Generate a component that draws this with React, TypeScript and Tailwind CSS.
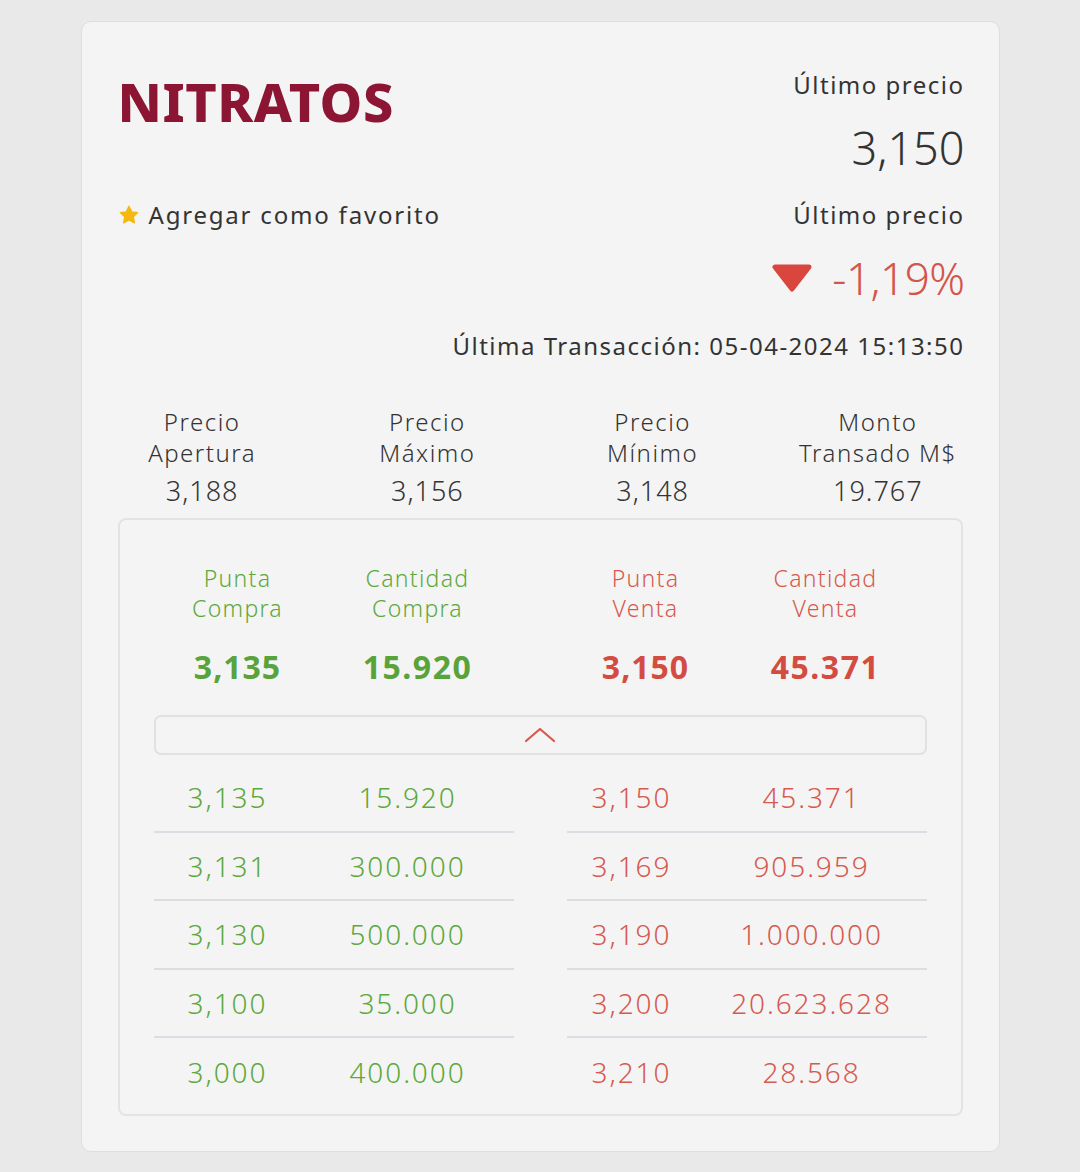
import React from 'react';

const font = { fontFamily: '"Noto Sans", "Open Sans", sans-serif' };

interface BookRow {
  bidPrice: string;
  bidQty: string;
  askPrice: string;
  askQty: string;
}

const book: BookRow[] = [
  { bidPrice: '3,135', bidQty: '15.920', askPrice: '3,150', askQty: '45.371' },
  { bidPrice: '3,131', bidQty: '300.000', askPrice: '3,169', askQty: '905.959' },
  { bidPrice: '3,130', bidQty: '500.000', askPrice: '3,190', askQty: '1.000.000' },
  { bidPrice: '3,100', bidQty: '35.000', askPrice: '3,200', askQty: '20.623.628' },
  { bidPrice: '3,000', bidQty: '400.000', askPrice: '3,210', askQty: '28.568' },
];

const stats = [
  { label: ['Precio', 'Apertura'], value: '3,188' },
  { label: ['Precio', 'Máximo'], value: '3,156' },
  { label: ['Precio', 'Mínimo'], value: '3,148' },
  { label: ['Monto', 'Transado M$'], value: '19.767' },
];

function Star() {
  return (
    <svg width="22" height="22" viewBox="0 0 24 24">
      <path
        d="M12 2.5l2.9 6.1 6.6.8-4.9 4.6 1.3 6.6L12 17.3l-5.9 3.3 1.3-6.6-4.9-4.6 6.6-.8z"
        fill="#f4b80f"
        stroke="#f4b80f"
        strokeWidth="1.5"
        strokeLinejoin="round"
      />
    </svg>
  );
}

function DownTriangle() {
  return (
    <svg width="40" height="28" viewBox="0 0 40 28">
      <path
        d="M3 3h34L20 25z"
        fill="#d9463e"
        stroke="#d9463e"
        strokeWidth="5"
        strokeLinejoin="round"
      />
    </svg>
  );
}

function ChevronUp() {
  return (
    <svg width="32" height="16" viewBox="0 0 32 16">
      <path d="M2 14L16 2l14 12" fill="none" stroke="#d9574c" strokeWidth="2.2" strokeLinecap="round" strokeLinejoin="round" />
    </svg>
  );
}

export default function App() {
  return (
    <div className="min-h-[1172px] w-full bg-[#e9e9e9] pt-[21px] pb-[20px]" style={font}>
      <div className="mx-auto w-[919px] rounded-[10px] border border-[#dedede] bg-[#f4f4f4] pb-[35px] text-[#333333]">
        {/* header */}
        <div className="flex justify-between pr-[34px] pl-[36px] pt-[48px]">
          <div className="flex flex-col">
            <h1 className="mt-px h-[60px] text-[54px] leading-[60px] font-extrabold tracking-[0.5px] text-[#8b1533]">
              NITRATOS
            </h1>
            <div className="mt-[69px] flex h-[30px] items-center gap-[9px] text-[24px] tracking-[1.8px]">
              <Star />
              <span>Agregar como favorito</span>
            </div>
          </div>
          <div className="flex flex-col items-end">
            <div className="h-[30px] text-[24px] leading-[30px] tracking-[1.5px]">Último precio</div>
            <div className="mt-[20px] h-[56px] text-[45px] leading-[56px] font-light">3,150</div>
            <div className="mt-[24px] h-[30px] text-[24px] leading-[30px] tracking-[1.5px]">Último precio</div>
            <div className="mt-[20px] flex h-[56px] items-center gap-[20px]">
              <DownTriangle />
              <span className="text-[44px] leading-[56px] font-light tracking-[-0.5px] text-[#d4554b]">-1,19%</span>
            </div>
            <div className="mt-[25px] h-[30px] text-[24px] leading-[30px] tracking-[1.5px]">
              Última Transacción: 05-04-2024 15:13:50
            </div>
          </div>
        </div>

        {/* stats */}
        <div className="mt-[45px] grid grid-cols-4 px-[8px] text-center text-[24px] font-light">
          {stats.map((s) => (
            <div key={s.value} className="flex flex-col items-center">
              <div className="leading-[31px] tracking-[1.5px]">{s.label[0]}</div>
              <div className="leading-[31px] tracking-[1.5px]">{s.label[1]}</div>
              <div className="mt-[6px] h-[34px] text-[27px] leading-[34px] tracking-[1px]">{s.value}</div>
            </div>
          ))}
        </div>

        {/* order book */}
        <div className="mx-[36px] mt-[10px] rounded-[8px] border-2 border-[#e2e3e7] px-[34px] pt-[43px] pb-[7px]">
          <div className="grid grid-cols-2 gap-[53px] text-center">
            <div className="grid grid-cols-[168px_1fr] text-[#5ca93c]">
              <div className="text-[23px] leading-[30px] font-light tracking-[1.3px]">
                <div>Punta</div>
                <div>Compra</div>
              </div>
              <div className="text-[23px] leading-[30px] font-light tracking-[1.3px]">
                <div>Cantidad</div>
                <div>Compra</div>
              </div>
              <div className="mt-[24px] h-[40px] text-[32px] leading-[40px] font-bold tracking-[1px] text-[#58a33a]">3,135</div>
              <div className="mt-[24px] h-[40px] text-[32px] leading-[40px] font-bold tracking-[1.5px] text-[#58a33a]">15.920</div>
            </div>
            <div className="grid grid-cols-[158px_1fr] text-[#d65a4f]">
              <div className="text-[23px] leading-[30px] font-light tracking-[1.3px]">
                <div>Punta</div>
                <div>Venta</div>
              </div>
              <div className="text-[23px] leading-[30px] font-light tracking-[1.3px]">
                <div>Cantidad</div>
                <div>Venta</div>
              </div>
              <div className="mt-[24px] h-[40px] text-[32px] leading-[40px] font-bold tracking-[1px] text-[#d44c41]">3,150</div>
              <div className="mt-[24px] h-[40px] text-[32px] leading-[40px] font-bold tracking-[1.5px] text-[#d44c41]">45.371</div>
            </div>
          </div>

          <button className="mt-[28px] flex h-[40px] w-full items-center justify-center rounded-[7px] border-2 border-[#e0e1e5]">
            <ChevronUp />
          </button>

          <div className="mt-[9px] grid grid-cols-2 gap-[53px] text-center text-[28px] font-light tracking-[1.9px]">
            <div className="text-[#5ca93c]">
              {book.map((r, i) => (
                <div
                  key={r.bidPrice}
                  className={`grid h-[68.5px] grid-cols-[148px_1fr] items-center ${i < book.length - 1 ? 'border-b-2 border-[#dcdde2]' : ''}`}
                >
                  <span>{r.bidPrice}</span>
                  <span>{r.bidQty}</span>
                </div>
              ))}
            </div>
            <div className="text-[#d65a4f]">
              {book.map((r, i) => (
                <div
                  key={r.askPrice}
                  className={`grid h-[68.5px] grid-cols-[130px_1fr] items-center ${i < book.length - 1 ? 'border-b-2 border-[#dcdde2]' : ''}`}
                >
                  <span>{r.askPrice}</span>
                  <span>{r.askQty}</span>
                </div>
              ))}
            </div>
          </div>
        </div>
      </div>
    </div>
  );
}
